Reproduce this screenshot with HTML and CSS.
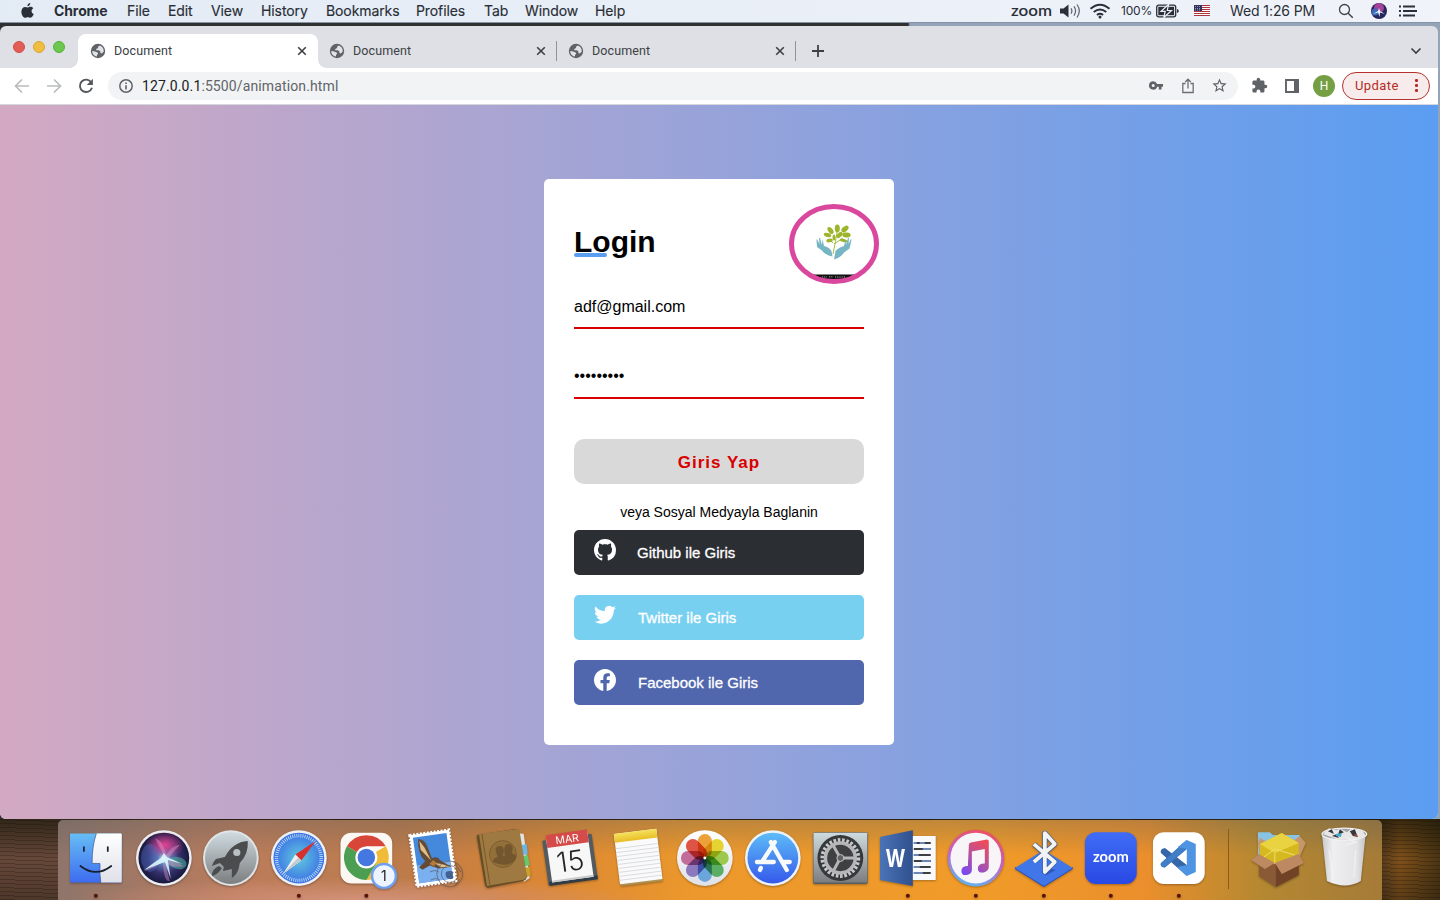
FILE: index.html
```html
<!DOCTYPE html>
<html lang="en">
<head>
<meta charset="utf-8">
<title>Document</title>
<link rel="stylesheet" href="styles.css">
</head>
<body>
<svg class="defs" width="0" height="0">
  <defs>
    <symbol id="globe" viewBox="0 0 16 16"><circle cx="8" cy="8" r="7.200" fill="#5f6368"/><path d="M9.800 2.600 8 3.700l.1 1.300-1.900 1v1.200h2.600l1.600 1.400v1.500l1.300.3 2-1.600c.4-2.900-1.300-5.300-3.900-6.200zM2.200 8l2.900.5 2.500 1 .6 1.300-1.100 1-.2 1.700c-2.700-.3-4.700-2.700-4.700-5.500z" fill="#e2e3e6"/></symbol>
    <symbol id="close" viewBox="0 0 10 10"><path d="M1.200 1.200l7.600 7.600M8.800 1.200l-7.600 7.600" stroke="#3c4043" stroke-width="1.600"/></symbol>
    <linearGradient id="blueV" x2="0" y2="1"><stop stop-color="#67bdf5"/><stop offset="1" stop-color="#3d6cf0"/></linearGradient>
    <linearGradient id="whiteV" x2="0" y2="1"><stop stop-color="#fff"/><stop offset="1" stop-color="#dfe1e8"/></linearGradient>
    <linearGradient id="silver" x2="0" y2="1"><stop stop-color="#cfdbe0"/><stop offset="1" stop-color="#7c7e7f"/></linearGradient>
    <linearGradient id="zoomG" x2="0" y2="1"><stop stop-color="#3f6cf6"/><stop offset="1" stop-color="#2949e4"/></linearGradient>
    <linearGradient id="storeG" x2="0" y2="1"><stop stop-color="#5dbcf8"/><stop offset="1" stop-color="#3559ea"/></linearGradient>
    <linearGradient id="noteG" x2="0" y2="1"><stop stop-color="#f6e15e"/><stop offset="1" stop-color="#e9be25"/></linearGradient>
    <linearGradient id="musicG" x1=".6" x2=".3" y2="1"><stop stop-color="#ed4f63"/><stop offset=".5" stop-color="#c463c6"/><stop offset="1" stop-color="#58b9f5"/></linearGradient>
    <linearGradient id="noteM" x1=".7" x2=".2" y2="1"><stop stop-color="#ee4c5c"/><stop offset=".45" stop-color="#b8529a"/><stop offset="1" stop-color="#7a49f0"/></linearGradient>
    <linearGradient id="wordG" x2="1" y2="0"><stop stop-color="#4a74b8"/><stop offset="1" stop-color="#304f8d"/></linearGradient>
    <linearGradient id="binG" x2="1" y2="0"><stop stop-color="#c9c9cb"/><stop offset=".25" stop-color="#efeff1"/><stop offset=".8" stop-color="#e3e3e6"/><stop offset="1" stop-color="#c4c4c7"/></linearGradient>
    <radialGradient id="siriG"><stop stop-color="#b5f2f5"/><stop offset=".22" stop-color="#5e83bd"/><stop offset=".6" stop-color="#36306d"/><stop offset="1" stop-color="#17183c"/></radialGradient>
    <radialGradient id="safariG"><stop stop-color="#60c9dd"/><stop offset="1" stop-color="#3c72e6"/></radialGradient>
    <radialGradient id="siriP"><stop stop-color="#e2418f"/><stop offset="1" stop-color="#e2418f" stop-opacity="0"/></radialGradient>
  </defs>
</svg>

<header class="menubar">
  <svg class="apple" viewBox="0 0 14 17"><path d="M9.900 0c.2 1.900-1.300 3.500-3 3.500C6.700 1.700 8.300.2 9.900 0zM7.200 4.700c.7 0 1.700-.8 3-.8 1.200 0 2.300.6 3 1.600-2.700 1.600-2.200 5.200.5 6.300-.6 1.700-2 4-3.500 4-1.100 0-1.500-.7-2.900-.7s-1.800.7-2.900.7C2.500 15.800.4 12.500.4 9.200c0-3.200 2-5 4-5 1.300 0 2.200.5 2.800.5z" fill="#2b3038"/></svg>
  <nav class="menus">
    <b>Chrome</b><span>File</span><span>Edit</span><span>View</span><span>History</span><span>Bookmarks</span><span>Profiles</span><span>Tab</span><span>Window</span><span>Help</span>
  </nav>
  <div class="status">
    <svg class="zoomtext" viewBox="0 0 49 18"><text x="0" y="14" textLength="41" lengthAdjust="spacingAndGlyphs">zoom</text></svg>
    <svg class="volume" viewBox="0 0 22 16"><path d="M0 5.500h3.500L8.500 1.500v13l-5-4H0z" fill="#2b3038"/><path d="M11 5.300q1.800 2.700 0 5.400M14 3.400q3.200 4.600 0 9.200M17 1.500q4.600 6.500 0 13" fill="none" stroke="#596069" stroke-width="1.200"/></svg>
    <svg class="wifi" viewBox="0 0 22 16"><path d="M1.500 5.800q9.500-8.300 19 0M4.700 9q6.300-5.200 12.600 0M7.900 12q3.100-2.500 6.200 0" fill="none" stroke="#2b3038" stroke-width="1.900"/><circle cx="11" cy="14" r="1.500" fill="#2b3038"/></svg>
    <span class="percent">100%</span>
    <svg class="battery" viewBox="0 0 23 14"><rect x=".7" y="1.200" width="19" height="11.600" rx="2" fill="none" stroke="#2b3038" stroke-width="1.300"/><rect x="2.300" y="2.800" width="15.800" height="8.400" fill="#2b3038"/><path d="M12.500.5 5 7.300h4.200L7.800 13.500l7.700-7h-4.200z" fill="#2b3038" stroke="#edf2f8" stroke-width="1.200"/><path d="M21 5v4q1.800-.5 1.800-2T21 5z" fill="#2b3038"/></svg>
    <svg class="flag" viewBox="0 0 16 11"><path fill="#fff" d="M0 0h16v11H0z"/><path d="M0 .5h16M0 2.500h16M0 4.500h16M0 6.500h16M0 8.500h16M0 10.500h16" stroke="#ae3440"/><path fill="#30345f" d="M0 0h8v6H0z"/><path d="M1 1.500h6M1 3.500h6M1 5h6" stroke="#aaa9c4" stroke-width=".8" stroke-dasharray="1 1"/></svg>
    <span class="clock">Wed 1:26 PM</span>
    <svg class="search" viewBox="0 0 16 16"><circle cx="6.500" cy="6.500" r="5" fill="none" stroke="#3f454d" stroke-width="1.300"/><path d="m10.200 10.200 4.600 4.600" stroke="#3f454d" stroke-width="1.500"/></svg>
    <svg class="sirimini" viewBox="0 0 16 16"><circle cx="8" cy="8" r="8" fill="#25265b"/><circle cx="8" cy="5" r="5" fill="#a4439c"/><circle cx="4" cy="9" r="3.500" fill="#3d69b8"/><path d="m8 5 1 3 5 3-5-1.500L8.500 14 7 9.500 2 11l5-3z" fill="#e7f6ff"/></svg>
    <svg class="list" viewBox="0 0 18 12"><path d="M0 1.500h2M0 6h2M0 10.500h2M4 1.500h12M4 6h14M4 10.500h12" stroke="#2b3038" stroke-width="1.800"/></svg>
  </div>
</header>

<main class="window">
  <div class="tabstrip">
    <div class="lights"><i class="red"></i><i class="yellow"></i><i class="green"></i></div>
    <div class="tab active"><svg class="fav"><use href="#globe"/></svg><span>Document</span><svg class="x"><use href="#close"/></svg></div>
    <div class="tab"><svg class="fav"><use href="#globe"/></svg><span>Document</span><svg class="x"><use href="#close"/></svg></div>
    <div class="tab"><svg class="fav"><use href="#globe"/></svg><span>Document</span><svg class="x"><use href="#close"/></svg></div>
    <svg class="plus" viewBox="0 0 12 12"><path d="M6 0v12M0 6h12" stroke="#3c4043" stroke-width="1.800"/></svg>
    <svg class="chevron" viewBox="0 0 12 8"><path d="m1.500 1.500 4.500 4.500 4.500-4.500" fill="none" stroke="#3c4043" stroke-width="1.700"/></svg>
  </div>
  <div class="toolbar">
    <svg class="nav" viewBox="0 0 16 16"><path d="M15 8H2M8 1.500 1.500 8 8 14.500" fill="none" stroke="#babcbe" stroke-width="1.700"/></svg>
    <svg class="nav" viewBox="0 0 16 16"><path d="M1 8h13M8 1.500 14.500 8 8 14.500" fill="none" stroke="#babcbe" stroke-width="1.700"/></svg>
    <svg class="nav" viewBox="0 0 16 16"><path d="M13.300 4.400A6.200 6.200 0 1 0 14 9.800" fill="none" stroke="#54585d" stroke-width="1.900"/><path d="M14.900.8v6.300H8.700z" fill="#54585d"/></svg>
    <div class="address">
      <svg class="info" viewBox="0 0 14 14"><circle cx="7" cy="7" r="6.200" fill="none" stroke="#5f6368" stroke-width="1.500"/><path d="M7 6.200V10.500M7 3.500v1.500" stroke="#5f6368" stroke-width="1.600"/></svg>
      <span class="url">127.0.0.1<em>:5500/animation.html</em></span>
      <svg class="key" viewBox="0 0 14 9"><path fill-rule="evenodd" d="M4.200.3a4.200 4.200 0 1 0 4 5.500h1.600v2.700h2.700V5.800H14V2.900H8.100A4.200 4.200 0 0 0 4.200.3zm0 2.700a1.500 1.500 0 1 1 0 3 1.500 1.500 0 0 1 0-3z" fill="#5f6368"/></svg>
      <svg class="share" viewBox="0 0 12 16"><path d="M3.500 5.500H.8v9h10.400v-9H8.500M6 10.500V1.500M3.200 4 6 1.200 8.800 4" fill="none" stroke="#6b6f74" stroke-width="1.300"/></svg>
      <svg class="star" viewBox="0 0 24 24"><path d="m22 9.240-7.190-.62L12 2 9.190 8.630 2 9.240l5.460 4.730L5.820 21 12 17.270 18.180 21l-1.630-7.030L22 9.240zM12 15.400l-3.760 2.270 1-4.280-3.320-2.880 4.380-.38L12 6.100l1.710 4.040 4.380.38-3.320 2.880 1 4.280L12 15.400z" fill="#5f6368"/></svg>
    </div>
    <svg class="puzzle" viewBox="0 0 24 24"><path d="M20.500 11H19V7c0-1.100-.9-2-2-2h-4V3.500a2.500 2.500 0 0 0-5 0V5H4c-1.100 0-1.990.9-1.990 2v3.800H3.500a2.700 2.700 0 0 1 0 5.400H2V20c0 1.100.9 2 2 2h3.800v-1.500a2.700 2.700 0 0 1 5.400 0V22H17c1.100 0 2-.9 2-2v-4h1.500a2.500 2.500 0 0 0 0-5z" fill="#5f6368"/></svg>
    <svg class="panel" viewBox="0 0 14 14"><path d="M1 1h12v12H1z" fill="#fff" stroke="#5f6368" stroke-width="1.900"/><path d="M9 1h5v12H9z" fill="#5f6368"/></svg>
    <span class="avatar">H</span>
    <div class="update"><span>Update</span><i class="dots"></i></div>
  </div>

  <section class="page">
    <form class="card">
      <svg class="logo" viewBox="0 0 90 80">
        <clipPath id="oval"><ellipse cx="45" cy="40" rx="41" ry="36"/></clipPath>
        <path clip-path="url(#oval)" d="M0 70.500h90V80H0z" fill="#111"/>
        <path d="M33 73h5M40 72.800h4M46 73h11" stroke="#aaa" stroke-width="1" stroke-dasharray="1.200 1"/>
        <ellipse cx="45" cy="40" rx="42.500" ry="37.500" fill="none" stroke="#d9489d" stroke-width="5"/>
        <g fill="#9db52d"><ellipse cx="48.300" cy="24.500" rx="2.500" ry="4"/><ellipse cx="41.500" cy="26.500" rx="2.300" ry="4" transform="rotate(-38 41.500 26.500)"/><ellipse cx="56" cy="25" rx="2.500" ry="4.200" transform="rotate(50 56 25)"/><ellipse cx="38.500" cy="31" rx="3.800" ry="2" transform="rotate(15 38.500 31)"/><ellipse cx="57.500" cy="31" rx="4.200" ry="2.400" transform="rotate(5 57.500 31)"/><ellipse cx="50.500" cy="31" rx="2.200" ry="3.700" transform="rotate(45 50.500 31)"/><ellipse cx="40.500" cy="36.500" rx="3.300" ry="1.800" transform="rotate(-10 40.500 36.500)"/><ellipse cx="54.500" cy="36.500" rx="3.800" ry="1.600" transform="rotate(15 54.500 36.500)"/><ellipse cx="45" cy="33.500" rx="1.500" ry="3"/></g>
        <path d="M48 28q-1 8-4 22M45 40l9-6M44 39l-4-4" fill="none" stroke="#9db52d" stroke-width=".9"/>
        <path d="m27.500 36 .5-1 2.500 5L30 34h1l2 7 .5-6 1.500 7q5 1 7.500 5l1 5.500q-8-2-10.500-6l-5-3.500zM62.500 36l-.5-1-2.500 5 .5-6h-1l-2 7-.5-5-1.500 6q-6 2-8.500 5l-1.500 8.500q7-2 10-7l5.500-4z" fill="#76b5c3"/>
      </svg>
      <h1>Login</h1>
      <div class="field">adf@gmail.com</div>
      <div class="field second">•••••••••</div>
      <button type="button" class="submit">Giris Yap</button>
      <p>veya Sosyal Medyayla Baglanin</p>
      <div class="social github"><svg viewBox="0 0 16 16"><path d="M8 0C3.580 0 0 3.580 0 8c0 3.540 2.290 6.530 5.470 7.590.4.070.55-.17.55-.38 0-.19-.01-.82-.01-1.490-2.010.37-2.530-.49-2.690-.94-.09-.23-.48-.94-.82-1.130-.28-.15-.68-.52-.01-.53.63-.01 1.080.58 1.230.82.72 1.210 1.870.87 2.330.66.070-.52.28-.87.51-1.070-1.780-.2-3.640-.89-3.640-3.950 0-.87.31-1.590.82-2.150-.08-.2-.36-1.020.08-2.120 0 0 .67-.21 2.200.82.64-.18 1.320-.27 2-.27s1.360.09 2 .27c1.530-1.040 2.200-.82 2.200-.82.44 1.100.16 1.920.08 2.120.51.56.82 1.270.82 2.150 0 3.070-1.870 3.750-3.650 3.950.29.25.54.73.54 1.480 0 1.070-.01 1.930-.01 2.200 0 .21.15.46.55.38A8.010 8.010 0 0 0 16 8c0-4.420-3.580-8-8-8z"/></svg><span>Github ile Giris</span></div>
      <div class="social twitter"><svg viewBox="0 0 16 16"><path d="M5.026 15c6.038 0 9.341-5.003 9.341-9.334 0-.14 0-.282-.006-.422A6.685 6.685 0 0 0 16 3.542a6.658 6.658 0 0 1-1.889.518 3.301 3.301 0 0 0 1.447-1.817 6.533 6.533 0 0 1-2.087.793A3.286 3.286 0 0 0 7.875 6.030a9.325 9.325 0 0 1-6.767-3.429 3.289 3.289 0 0 0 1.018 4.382A3.323 3.323 0 0 1 .640 6.575v.045a3.288 3.288 0 0 0 2.632 3.218 3.203 3.203 0 0 1-.865.115 3.230 3.230 0 0 1-.614-.057 3.283 3.283 0 0 0 3.067 2.277A6.588 6.588 0 0 1 .780 13.580a6.320 6.320 0 0 1-.780-.045A9.344 9.344 0 0 0 5.026 15z"/></svg><span>Twitter ile Giris</span></div>
      <div class="social facebook"><svg viewBox="0 0 16 16"><path d="M16 8.049c0-4.446-3.582-8.050-8-8.050C3.580 0-.002 3.603-.002 8.050c0 4.017 2.926 7.347 6.750 7.951v-5.625h-2.030V8.050H6.750V6.275c0-2.017 1.195-3.131 3.022-3.131.876 0 1.791.157 1.791.157v1.980h-1.009c-.993 0-1.303.621-1.303 1.258v1.510h2.218l-.354 2.326H9.250V16c3.824-.604 6.750-3.934 6.750-7.951z"/></svg><span>Facebook ile Giris</span></div>
    </form>
  </section>
</main>

<footer class="desktop">
  <div class="dock">
    <svg class="app" viewBox="0 0 68 80"><rect x="8" y="13.500" width="52" height="49" rx="1" fill="url(#blueV)"/><path d="M34.500 13.500H59q1 0 1 1v47q0 1-1 1H39q-1.500-9-.8-19h-8q0-18 4.300-30z" fill="url(#whiteV)"/><path d="M34.500 13.500q-4.300 12-4.300 30h8q-.7 10 .8 19" fill="none" stroke="#35538f" stroke-width=".7"/><path d="M22 27v4M46 27v4" stroke="#1d2634" stroke-width="1.800" stroke-linecap="round"/><path d="M18.500 46q15.500 12 31 0" fill="none" stroke="#17202e" stroke-width="1.700" stroke-linecap="round"/><circle class="run" cx="34" cy="76" r="2"/></svg>
    <svg class="app" viewBox="0 0 68 80"><circle cx="34" cy="38" r="28" fill="#eceef1"/><circle cx="34" cy="38" r="25.500" fill="url(#siriG)"/><ellipse cx="35" cy="25" rx="20" ry="14" fill="url(#siriP)"/><ellipse cx="20" cy="38" rx="9" ry="14" fill="#4a6fc4" opacity=".4"/><ellipse cx="48" cy="43" rx="9" ry="6" fill="#4cae9b" opacity=".6" transform="rotate(15 48 43)"/><path d="M34 35 25 18q10 4 11 18 7-12 14-11-5 5-11 13l15 8q-12 3-19-4l5 19q-6 2-7-20-8 8-19 10 7-7 16-13z" fill="#e99ad0" opacity=".4"/><path d="m34 33 3 4 16 7-15-4 3 19-6-17-21 8 17-12z" fill="#d9ffff" opacity=".85"/></svg>
    <svg class="app" viewBox="0 0 68 80"><circle cx="34" cy="38" r="28" fill="#dfe4e6"/><circle cx="34" cy="38" r="26" fill="url(#silver)"/><path d="M51 21q-15 1-23 16l-9 2q-3 3-4 7l8-3 4 4-1 4 5-1 4-1v9q5-3 7-10l1-5q9-9 8-22zM22 46q-7 3-7 10 6-1 10-8z" fill="#4a4c4e"/><circle cx="40" cy="32.500" r="3.600" fill="#bac0c3"/></svg>
    <svg class="app" viewBox="0 0 68 80"><circle cx="34" cy="38" r="28" fill="#eef1f5"/><circle cx="34" cy="38" r="25.500" fill="url(#safariG)"/><circle cx="34" cy="38" r="22.500" fill="none" stroke="#c7e4fa" stroke-width="3.500" stroke-dasharray=".8 1.300"/><path d="m51 21-20.500 13.500 6 6z" fill="#d92f2c"/><path d="m18 54 12.500-19.500 6 6z" fill="#edf0f2"/><path d="m18 54 15.500-16.500 3 3z" fill="#c2c9cf"/><circle class="run" cx="34" cy="76" r="2"/></svg>
    <svg class="app" viewBox="0 0 68 80"><rect x="7.500" y="12.500" width="52" height="51" rx="11" fill="#fbf8f4"/><path d="M33.500 37.500 14 26.300A22.500 22.500 0 0 1 53 26.300H33.500z" fill="#d84639"/><path d="M33.500 37.500 53 26.300A22.500 22.500 0 0 1 33.500 60z" fill="#f0bc37"/><path d="M33.500 37.500 14 26.300A22.500 22.500 0 0 0 33.500 60l10-17z" fill="#4c9e52"/><circle cx="33.500" cy="37.500" r="11" fill="#fff"/><circle cx="33.500" cy="37.500" r="8.800" fill="#4477e0"/><circle cx="51.200" cy="56" r="12" fill="#eef4ff" stroke="#6e9ff1" stroke-width="2.500"/><text x="51.200" y="61" text-anchor="middle" font-size="14" fill="#222">1</text><circle class="run" cx="33.500" cy="76" r="2"/></svg>
    <svg class="app" viewBox="0 0 68 80"><g transform="rotate(-8 34 38)"><rect x="13" y="12" width="40" height="52" fill="#fff" stroke="#fff" stroke-width="2.500" stroke-dasharray="2 1.500"/><path d="M16 15h34v46H16z" fill="#4489db"/><path d="M16 43h34v18H16z" fill="#7aaff0"/><path d="M21 17q6 1 8 8l3 13q6-2 8 3l10 8-13 0-8-4-8 3-3-3 7-5q-7-8-4-23z" fill="#654a35"/><path d="m22 19 4 7 5 14-9-12zM34 43l7 2 8 4-10-1z" fill="#dfc08b"/><path d="m29 43 4-3 3 3-3 4z" fill="#b87938"/></g><g fill="none" stroke="#544f50" opacity=".6"><circle cx="50" cy="54" r="13"/><circle cx="50" cy="54" r="8.500"/><path d="M32 47q5-4 9 0M30 52q5-3 9 0M31 60q5-3 9 0M55 43l6 9M60 59l-5 7"/></g><path d="M46 52q4-2 8 0-2 3 0 5-2 3-4 2-5 0-4-7zM49 51l2-3" fill="#374f79" opacity=".8"/></svg>
    <svg class="app" viewBox="0 0 68 80"><path d="m50 13 6 1 6 44-6 4z" fill="#e1e2e1"/><path d="m54 25 5-1 1 10-5 1z" fill="#68b7e8"/><path d="m55 36 5-1 2 10-6 2z" fill="#63c96f"/><path d="m56 48 6-1 1 8-5 3z" fill="#cda028"/><path d="m9 15 37-6q4-.5 5 3l8 44q0 4-4 5l-34 7q-3 0-4-3L9 18q0-3 0-3z" fill="#654d25"/><path d="m11 14 37-5q3-.5 4 3l7 43q0 4-4 5l-36 6z" fill="#9e7a42"/><path d="m14 14 8 51" stroke="#765827"/><circle cx="35" cy="34" r="13.500" fill="#93703a" stroke="#7d5d2d"/><path d="M25 42q0-4 5-5-5-10 1-11 7-1 4 10 5-1 5 5 1-5 5-6l3 4q-8 10-23 3zM37 36q-2-12 3-12 7 0 4 9l5 3-3 5-8 3z" fill="#73562d"/></svg>
    <svg class="app" viewBox="0 0 68 80"><g transform="rotate(-8 34 38)"><path d="M9 17h50v45H9z" fill="#535b60"/><path d="M10 59h49v4H10z" fill="#303c46"/><path d="M13 13h42v47H13z" fill="#f7f7f8"/><path d="M13 12h42v13H13z" fill="#d44b49"/><path d="M13 58h42v2H13z" fill="#c9c9cb"/><text x="34" y="22.500" text-anchor="middle" font-size="10.500" fill="#fff">MAR</text><text x="34" y="51" text-anchor="middle" font-size="28" font-weight="300" fill="#262626">15</text></g></svg>
    <svg class="app" viewBox="0 0 68 80"><g transform="rotate(-7 34 38)"><path d="M14 12h42v52H14z" fill="#ad9251"/><path d="M13 11h43v51H13z" fill="#fafafa"/><path d="M13 11h43v9H13z" fill="url(#noteG)"/><path d="M13 26h43M13 30h43M13 34h43M13 38h43M13 42h43M13 46h43M13 50h43M13 54h43M13 58h43" stroke="#d3d5dc" stroke-width=".8"/></g></svg>
    <svg class="app" viewBox="0 0 68 80"><circle cx="34" cy="38" r="28" fill="url(#whiteV)"/><g class="petals"><rect x="27" y="14" width="14" height="24" rx="7" fill="#eca238"/><rect x="27" y="14" width="14" height="24" rx="7" fill="#e5d332" transform="rotate(45 34 38)"/><rect x="27" y="14" width="14" height="24" rx="7" fill="#9cc84e" transform="rotate(90 34 38)"/><rect x="27" y="14" width="14" height="24" rx="7" fill="#5baf65" transform="rotate(135 34 38)"/><rect x="27" y="14" width="14" height="24" rx="7" fill="#6ca5dc" transform="rotate(180 34 38)"/><rect x="27" y="14" width="14" height="24" rx="7" fill="#8c78bd" transform="rotate(225 34 38)"/><rect x="27" y="14" width="14" height="24" rx="7" fill="#c26d99" transform="rotate(270 34 38)"/><rect x="27" y="14" width="14" height="24" rx="7" fill="#de5545" transform="rotate(315 34 38)"/></g><circle cx="34" cy="38" r="1.500" fill="#fff"/></svg>
    <svg class="app" viewBox="0 0 68 80"><circle cx="34" cy="38" r="28" fill="#edf2f8"/><circle cx="34" cy="38" r="25.500" fill="url(#storeG)"/><g stroke="#f8f9fb" stroke-linecap="round"><path d="m36 22-13 20M32 22l16 28M18 42h17M45 42h6" stroke-width="4.300"/><path d="m22 48-1 2" stroke-width="4.300"/></g></svg>
    <svg class="app" viewBox="0 0 68 80"><rect x="6" y="12" width="55" height="52" rx="2" fill="#575d62"/><rect x="6.500" y="12.500" width="54" height="50" rx="1" fill="url(#silver)"/><circle cx="33.500" cy="38" r="23" fill="#363839"/><circle cx="33.500" cy="38" r="18" fill="none" stroke="#c6c8c9" stroke-width="4" stroke-dasharray="2.600 1.700"/><circle cx="33.500" cy="38" r="15" fill="#3e4041" stroke="#b4b6b7" stroke-width="3.500"/><path d="m26 25 7.500 13-7 13M33.500 38h15" fill="none" stroke="#b4b6b7" stroke-width="3"/><circle cx="33.500" cy="38" r="3.500" fill="#606364" stroke="#c4c6c7"/></svg>
    <svg class="app" viewBox="0 0 68 80"><path d="M36 16h26v44H36z" fill="#f8f9fb"/><path d="M40 23h17M40 29h17M40 35h17M40 41h17M40 47h17M40 53h17" stroke="#3d3e42" stroke-width="2"/><path d="M40 23h3M46 23h5M49 29h8M40 35h5M48 41h9M40 47h6M40 53h9" stroke="#6b87b9" stroke-width="2"/><path d="m6 17 33-7v56L6 60z" fill="url(#wordG)"/><text x="21.500" y="47.500" text-anchor="middle" font-size="25" font-weight="700" fill="#fff" textLength="20" lengthAdjust="spacingAndGlyphs">W</text><circle class="run" cx="34" cy="76" r="2"/></svg>
    <svg class="app" viewBox="0 0 68 80"><circle cx="34" cy="38" r="28.500" fill="url(#musicG)"/><circle cx="34" cy="38" r="25.500" fill="#f7f5f8"/><path d="M27 25q0-2 2-2.500l16-3q2 0 2 2V47q0 4-5 5.500-6 1-6-4t7-5V29l-13 2.500V50q0 4-5 5-5.500 1-5.500-4t6.500-5z" fill="url(#noteM)"/><circle class="run" cx="34" cy="76" r="2"/></svg>
    <svg class="app" viewBox="0 0 68 80"><path d="m5 47 29 18v2L5 49zM63 47 34 65v2l29-18z" fill="#244dbf"/><path d="m5 48 29-18 29 18-29 18z" fill="#4176e8"/><path d="m31 52 7-4 8 2-9 5z" fill="#3159bd"/><path d="m24 24 21 18-10 10V13l10 11-21 18" fill="none" stroke="#315d9b" stroke-width="5" stroke-linejoin="round"/><path d="m24 24 21 18-10 10V13l10 11-21 18" fill="none" stroke="#f3f3f3" stroke-width="3.800" stroke-linejoin="round"/><circle class="run" cx="34" cy="76" r="2"/></svg>
    <svg class="app" viewBox="0 0 68 80"><rect x="8" y="12" width="52" height="52" rx="11" fill="url(#zoomG)"/><text class="zoomlogo" x="16" y="42.500" textLength="36" lengthAdjust="spacingAndGlyphs">zoom</text><circle class="run" cx="34" cy="76" r="2"/></svg>
    <svg class="app" viewBox="0 0 68 80"><rect x="8" y="12" width="52" height="52" rx="11" fill="#fff"/><path d="M42 20v36L16 33q-1-2 1-4l3-1 22 17V29L20 47.500l-3-.5q-2-2-1-4z" fill="#3566a8"/><path d="M42 20v9L31 38 20 47.500l-3-1-1.500-2.500z" fill="#407fc7"/><path d="m42 20 9 4v28l-9 4-10-9 10-2V29l-9-2z" fill="#4e94e3"/><circle class="run" cx="34" cy="76" r="2"/></svg>
    <i class="separator"></i>
    <svg class="app" viewBox="0 0 68 80"><path d="M16 12h12l3 3h27v22H16z" fill="#88c3e6"/><path d="m17 34 18 10 22-10v21L34 67 17 56z" fill="#8a5936"/><path d="m34 42 23-7v20L34 67z" fill="#704326"/><path d="m18 18-2 5 2 14 16-10zM58 16l6 7-7 16-10-15z" fill="#c8966b"/><path d="m18 24 22-11 17 10v13L33 44 18 37z" fill="#d5b91f"/><path d="m18 24 22-11 17 10-24 10z" fill="#ead341"/><path d="M33 33v11M22 37l11-8 20 6" fill="none" stroke="#eedd73"/><path d="m17 34-8 6 14 9 10-6zM57 34l5 9-22 11-7-11z" fill="#bd8962"/></svg>
    <svg class="app bin" viewBox="0 0 68 80"><path d="m11 14 44-1-5 48q-15 9-34 0z" fill="url(#binG)"/><ellipse cx="33.500" cy="14" rx="22.500" ry="6" fill="#a4a5a7" stroke="#f3f3f3" stroke-width="1.200"/><path d="m12 14 6-6 8 2 3-2 7 4 5-4 11 3 3 5-9 3-18 1z" fill="#e7e7e7"/><path d="m17 11 4-2 2 5zM29 9l4 3-6 3zM39 11l5-2 3 8-5-1zM21 16l5-2 2 4z" fill="#34383d"/><path d="m25 14 6-1-1 4-5-1z" fill="#46aac8"/><path d="m42 15 4-1 1 3z" fill="#a54832"/><path d="m36 18 9 4-10 3M18 30q3 17 4 30M45 30l-2 28" fill="none" stroke="#fff" stroke-width="1.500" opacity=".4"/></svg>
  </div>
</footer>
</body>
</html>
```
FILE: styles.css
```css
* { box-sizing: border-box; }
body {
  margin: 0;
  width: 1440px;
  height: 900px;
  overflow: hidden;
  display: flex;
  flex-direction: column;
  font-family: Roboto, sans-serif;
  background: linear-gradient(to right, #2f302f 0 908px, #94a4b8 910px);
}
svg { display: block; flex: none; }
.defs { position: absolute; }

.menubar {
  height: 23px;
  flex: none;
  display: flex;
  align-items: center;
  padding: 0 23px 1px 21px;
  background: linear-gradient(to right, #e3ebf5, #f0f3f9);
  border-bottom: 1px solid #8594a6;
  color: #292e36;
  font: 14px/22px Inter, sans-serif;
}
.apple { width: 13px; height: 16px; margin-right: 20px; }
.menus { display: grid; grid-template-columns: 73px 41px 43px 50px 65px 90px 68px 41px 70px 60px; white-space: nowrap; letter-spacing: -.1px; }
.menus span { -webkit-text-stroke: .15px; }
.status { margin-left: auto; display: flex; align-items: center; }
.zoomtext { width: 49px; height: 18px; font: 600 16px Lato, sans-serif; fill: #2b3038; }
.volume { width: 22px; height: 16px; }
.wifi { width: 22px; height: 16px; margin-left: 7px; }
.percent { font-size: 12px; width: 35px; margin-left: 10px; letter-spacing: -.2px; }
.battery { width: 23px; height: 14px; }
.flag { width: 16px; height: 11px; margin-left: 15px; }
.clock { width: 90px; margin-left: 20px; white-space: nowrap; letter-spacing: -.1px; }
.search { width: 16px; height: 16px; margin-left: 18px; }
.sirimini { width: 16px; height: 16px; margin-left: 17px; }
.list { width: 18px; height: 12px; margin-left: 12px; }

.window {
  width: 1438px;
  height: 793px;
  margin-top: 3px;
  flex: none;
  display: flex;
  flex-direction: column;
  overflow: hidden;
  border-radius: 6px;
  background: #dee0e5;
}
.tabstrip { height: 42px; display: flex; padding-top: 8px; color: #3c4043; font-size: 12.5px; }
.lights { width: 78px; display: flex; gap: 8px; padding: 7px 0 0 13px; }
.lights i { width: 12px; height: 12px; border-radius: 50%; border: 1px solid #d24d48; }
.red { background: #e35d57; }
.lights .yellow { background: #f0bd41; border-color: #daa733; }
.lights .green { background: #6bc74e; border-color: #57b13c; }
.tab { position: relative; width: 239px; display: flex; align-items: center; padding: 0 11px 0 12px; }
.tab span { margin: -2px 0 0 8px; flex: 1; letter-spacing: .12px; }
.tab.active { width: 240px; background: #fff; border-radius: 8px 8px 0 0; }
.tab.active::before, .tab.active::after { content: ""; position: absolute; bottom: 0; width: 8px; height: 8px; }
.tab.active::before { left: -8px; background: radial-gradient(circle at 0 0, transparent 7.5px, #fff 8px); }
.tab.active::after { right: -8px; background: radial-gradient(circle at 100% 0, transparent 7.5px, #fff 8px); }
.tab:not(.active) { background: linear-gradient(#909399, #909399) right 7px / 1px 20px no-repeat; }
.tab:not(.active) .fav { margin-left: -1px; }
.fav { width: 16px; height: 16px; }
.x { width: 10px; height: 10px; }
.plus { width: 12px; height: 12px; margin: 11px 0 0 16px; }
.chevron { width: 12px; height: 8px; margin: 13px 16px 0 auto; }

.toolbar { height: 37px; display: flex; align-items: center; padding: 0 8px 1px 14px; background: #fff; border-bottom: 1px solid #d5d7dd; }
.nav { width: 16px; height: 16px; margin-right: 16px; }
.address { width: 1130px; height: 28px; margin-left: -2px; display: flex; align-items: center; padding: 0 10px 0 11px; border-radius: 14px; background: #f1f3f4; }
.info { width: 14px; height: 14px; }
.url { flex: 1; margin-left: 9px; color: #202124; font-size: 14px; letter-spacing: .12px; }
.url em { color: #606469; font-style: normal; }
.key { width: 14px; height: 9px; }
.share { width: 12px; height: 16px; margin-left: 19px; }
.star { width: 17px; height: 17px; margin-left: 17px; }
.puzzle { width: 17px; height: 17px; margin-left: 13px; }
.panel { width: 14px; height: 14px; margin-left: 17px; }
.avatar { width: 22px; height: 22px; margin-left: 14px; border-radius: 50%; background: #759f43; color: #fff; font-size: 12px; line-height: 22px; text-align: center; }
.update { width: 88px; height: 28px; margin-left: 7px; display: flex; align-items: center; justify-content: space-between; padding: 0 11px 0 12px; border: 1px solid #b3322e; border-radius: 14px; background: #f7eceb; color: #b42b26; font-size: 13px; letter-spacing: .4px; }
.dots { width: 3px; height: 15px; background: radial-gradient(circle, #b42b26 1.3px, transparent 1.7px) 0 0 / 3px 5px; }

.page { flex: 1; display: flex; align-items: center; justify-content: center; background: linear-gradient(to right, #d3a9c2, #5b9df1); font-family: "Liberation Sans", sans-serif; }
.card { position: relative; width: 350px; height: 566px; padding: 45px 30px 40px; border-radius: 5px; background: #fff; display: flex; flex-direction: column; color: #000; }
.logo { position: absolute; left: 245px; top: 25px; width: 90px; height: 80px; }
h1 { position: relative; align-self: flex-start; margin: 0; font-size: 30px; line-height: 35px; }
h1::before { content: ""; position: absolute; left: 0; bottom: 2px; width: 33px; height: 4px; border-radius: 2px; background: #5b9df1; }
.field { height: 45px; margin-top: 25px; border-bottom: 2px solid #d90000; font-size: 16px; line-height: 45px; }
.field.second { line-height: 43px; }
.submit { height: 45px; flex: none; margin-top: 40px; padding: 2px 0 0; border: 0; border-radius: 10px; background: #d9d9d9; color: #d90000; font: bold 17px "Liberation Sans", sans-serif; letter-spacing: 1px; }
p { margin: 20px 0 10px; font-size: 14px; line-height: 16px; text-align: center; }
.social { height: 45px; flex: none; margin-bottom: 20px; display: flex; padding-left: 20px; border-radius: 5px; color: #fff; font-size: 15px; line-height: 46px; -webkit-text-stroke: .3px #fff; }
.social svg { width: 22px; height: 22px; margin: 9px 22px 0 0; fill: #fff; }
.github { background: #2b2e33; }
.github svg { margin-right: 21px; }
.twitter { background: #78d0f1; }
.twitter svg { margin-top: 8px; }
.facebook { background: #5067ae; margin-bottom: 0; }

.desktop {
  flex: 1;
  display: flex;
  padding: 1px 58px 0;
  background: repeating-linear-gradient(2deg, rgba(20,10,5,.25) 0 1px, transparent 1px 4px), linear-gradient(rgba(20,20,8,.65), transparent 40px, rgba(30,25,15,.35)), linear-gradient(to right, #664839 0 60px, #54391c 1380px, #80511b 1400px, #4b3513);
}
.dock {
  width: 1324px;
  display: flex;
  padding-left: 4px;
  border-radius: 5px 5px 0 0;
  background: linear-gradient(rgba(80,90,95,.3), transparent 35px), radial-gradient(ellipse at 23% 100%, rgba(213,147,125,.9), transparent 20%), linear-gradient(to right, #8f756b, #bb7c5b 14%, #bd7b4a 26%, #d98635 36%, #ec982c 48%, #f09b29 70%, #eb8f2c 82%, #b48831 91%, #a57b38);
}
.app { width: 67.7px; height: 80px; filter: drop-shadow(0 1px 1px rgba(0,0,0,.3)); font-family: Inter, sans-serif; }
.run { fill: #531409; }
.petals { isolation: isolate; }
.petals rect { mix-blend-mode: multiply; }
.zoomlogo { font: 700 16px Lato, sans-serif; fill: #fff; }
.separator { width: 1px; height: 60px; margin: 9px 13px 0 15px; background: #8c5b18; }
.bin { margin-left: 2px; }
```
